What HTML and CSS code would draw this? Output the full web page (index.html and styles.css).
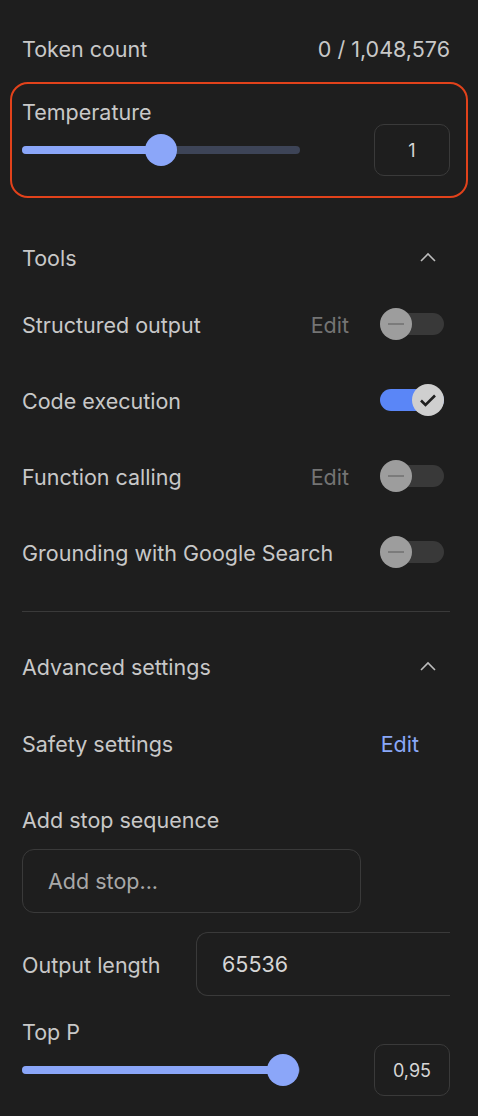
FILE: index.html
```html
<!DOCTYPE html>
<html>
<head>
<meta charset="utf-8">
<link rel="stylesheet" href="styles.css">
</head>
<body>
<div class="panel">
  <div class="row token-row">
    <span class="label">Token count</span>
    <span class="label">0 / 1,048,576</span>
  </div>

  <div class="temp-card">
    <div class="slider-label">Temperature</div>
    <div class="slider-row">
      <div class="slider">
        <div class="track"></div>
        <div class="fill" style="width:50%"></div>
        <div class="thumb" style="left:50%"></div>
      </div>
      <div class="num-box">1</div>
    </div>
  </div>

  <div class="section-head tools-head">
    <span class="label">Tools</span>
    <svg class="chev" width="18" height="12" viewBox="0 0 18 12"><path d="M2 10 L9 3 L16 10" fill="none" stroke="#bdbdbd" stroke-width="1.6"/></svg>
  </div>

  <div class="tool-row">
    <span class="label">Structured output</span>
    <div class="tool-right">
      <span class="edit-dim">Edit</span>
      <div class="toggle off"><div class="knob"><span class="dash"></span></div></div>
    </div>
  </div>
  <div class="tool-row">
    <span class="label">Code execution</span>
    <div class="tool-right">
      <div class="toggle on"><div class="knob"><svg width="22" height="22" viewBox="0 0 22 22"><path d="M4 11.5 L8.5 16 L18 6.5" fill="none" stroke="#1f1f1f" stroke-width="2.6"/></svg></div></div>
    </div>
  </div>
  <div class="tool-row">
    <span class="label">Function calling</span>
    <div class="tool-right">
      <span class="edit-dim">Edit</span>
      <div class="toggle off"><div class="knob"><span class="dash"></span></div></div>
    </div>
  </div>
  <div class="tool-row">
    <span class="label">Grounding with Google Search</span>
    <div class="tool-right">
      <div class="toggle off"><div class="knob"><span class="dash"></span></div></div>
    </div>
  </div>

  <div class="divider"></div>

  <div class="section-head adv-head">
    <span class="label">Advanced settings</span>
    <svg class="chev" width="18" height="12" viewBox="0 0 18 12"><path d="M2 10 L9 3 L16 10" fill="none" stroke="#bdbdbd" stroke-width="1.6"/></svg>
  </div>

  <div class="tool-row safety-row">
    <span class="label">Safety settings</span>
    <span class="edit-blue">Edit</span>
  </div>

  <div class="slider-label stop-label">Add stop sequence</div>
  <div class="stop-input">Add stop...</div>

  <div class="output-row">
    <span class="label">Output length</span>
    <div class="output-box">65536</div>
  </div>

  <div class="slider-label topp-label">Top P</div>
  <div class="slider-row">
    <div class="slider">
      <div class="track"></div>
      <div class="fill" style="width:94%"></div>
      <div class="thumb" style="left:94%"></div>
    </div>
    <div class="num-box">0,95</div>
  </div>
</div>
</body>
</html>
```

FILE: styles.css
```css
html, body {
  margin: 0;
  padding: 0;
  background: #1e1e1e;
}
body {
  font-family: Inter, "Open Sans", Roboto, sans-serif;
  color: #c8c8c8;
  font-size: 21.5px;
}
.panel {
  width: 428px;
  padding: 28px 0 20px 22px;
}
.label {
  font-size: 21.5px;
  padding-top: 2px;
  line-height: 38px;
  color: #c8c8c8;
}
.row {
  display: flex;
  justify-content: space-between;
  align-items: center;
}
.token-row {
  height: 40px;
}
.temp-card {
  margin: 14px -18px 0 -12px;
  padding: 16px 16px 20px 10px;
  border: 2px solid #e2421b;
  border-radius: 18px;
}
.slider-label {
  font-size: 21.5px;
  line-height: 24px;
  color: #c8c8c8;
}
.slider-row {
  display: flex;
  align-items: center;
  justify-content: space-between;
  height: 52px;
}
.slider {
  position: relative;
  width: 278px;
  height: 32px;
}
.track {
  position: absolute;
  left: 0;
  right: 0;
  top: 12px;
  height: 8px;
  border-radius: 4px;
  background: #3d4457;
}
.fill {
  position: absolute;
  left: 0;
  top: 12px;
  height: 8px;
  border-radius: 4px;
  background: #8ba6f9;
}
.thumb {
  position: absolute;
  top: 0;
  width: 32px;
  height: 32px;
  margin-left: -16px;
  border-radius: 50%;
  background: #8ba6f9;
}
.num-box {
  width: 74px;
  height: 50px;
  border: 1px solid #3a3a3a;
  border-radius: 10px;
  display: flex;
  align-items: center;
  justify-content: center;
  font-size: 18px;
  color: #d6d6d6;
}
.section-head {
  display: flex;
  justify-content: space-between;
  align-items: center;
  height: 40px;
}
.chev {
  margin-right: 13px;
}
.tools-head {
  margin-top: 39px;
}
.tool-row {
  display: flex;
  justify-content: space-between;
  align-items: center;
  height: 76px;
}
.tools-head + .tool-row {
  margin-top: 9px;
}
.tool-right {
  display: flex;
  align-items: center;
  gap: 31px;
}
.edit-dim {
  font-size: 21.5px;
  padding-top: 2px;
  color: #747474;
}
.edit-blue {
  font-size: 21.5px;
  padding-top: 2px;
  color: #8aa8f8;
  margin-right: 31px;
}
.toggle {
  position: relative;
  width: 64px;
  height: 22px;
  border-radius: 11px;
  margin-right: 6px;
}
.toggle.off {
  background: #393939;
}
.toggle.on {
  background: #5a86f7;
}
.knob {
  position: absolute;
  top: -5px;
  width: 32px;
  height: 32px;
  border-radius: 50%;
  display: flex;
  align-items: center;
  justify-content: center;
}
.toggle.off .knob {
  left: 0;
  background: #9d9d9d;
}
.toggle.on .knob {
  right: 0;
  background: #cfcfcf;
}
.dash {
  width: 16px;
  height: 2px;
  background: #7b7b7b;
}
.divider {
  height: 1px;
  background: #3a3a3a;
  margin-top: 21px;
}
.adv-head {
  margin-top: 34px;
}
.safety-row {
  margin-top: 19px;
}
.stop-label {
  margin-top: 27px;
}
.stop-input {
  margin-top: 17px;
  width: 312px;
  height: 62px;
  border: 1px solid #3a3a3a;
  border-radius: 12px;
  padding-left: 25px;
  display: flex;
  align-items: center;
  font-size: 21.5px;
  color: #a8a8a8;
}
.output-row {
  display: flex;
  align-items: center;
  justify-content: space-between;
  margin-top: 19px;
}
.output-box {
  width: 228px;
  height: 62px;
  border: 1px solid #3a3a3a;
  border-right: none;
  border-radius: 12px 0 0 12px;
  padding-left: 25px;
  display: flex;
  align-items: center;
  font-size: 21.5px;
  color: #d6d6d6;
}
.topp-label {
  margin-top: 24px;
}
```
